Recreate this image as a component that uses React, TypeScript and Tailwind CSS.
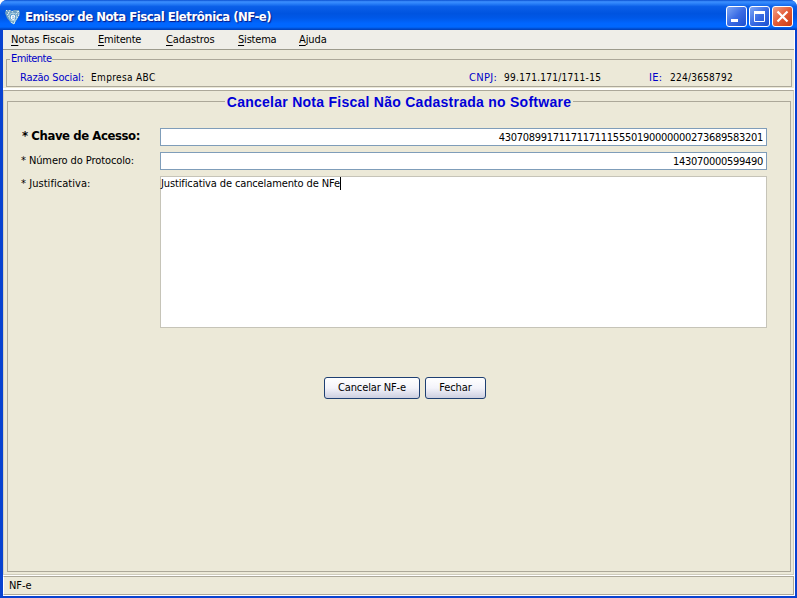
import type { ReactNode } from 'react';

function AppIcon() {
  return (
    <svg width="16" height="16" viewBox="0 0 16 16" className="shrink-0">
      <path d="M1 1h4l2 1 2-1h5l1 3-2 5-4 6-3-1-4-5-2-5z" fill="#6d9fc4" />
      <path d="M1 1l3 3M5 1L3 6M14 2l-3 3M2 5l3 4M14 6l-4 6M7 2l1 2M12 2l2 4" stroke="#e7f4f5" strokeWidth="1" strokeDasharray="1.5 1" />
      <circle cx="8" cy="8" r="3.8" fill="#3f87c0" stroke="#b9dce9" />
      <path d="M6.2 8.2h3.5c.2-2.7-3.3-2.8-3.5 0 0 2.3 2.3 2.6 3.5 1.3" fill="none" stroke="white" strokeWidth="1.3" />
      <path d="M6 13l3 2 1-3" fill="none" stroke="#d5eef2" />
    </svg>
  );
}

function CaptionButton({ close = false, children }: { close?: boolean; children: ReactNode }) {
  return (
    <button
      className={
        'h-[21px] w-[21px] shrink-0 rounded-[3px] border border-white ' +
        (close
          ? 'bg-linear-to-br from-[#f0a088] via-[#e35a35] to-[#c83c14]'
          : 'bg-linear-to-br from-[#7fa6f4] via-[#3a6be4] to-[#1c4fd0]')
      }
    >
      <svg width="19" height="19" viewBox="0 0 19 19">{children}</svg>
    </button>
  );
}

function MenuItem({ label, className }: { label: string; className: string }) {
  return (
    <span className={'shrink-0 ' + className}>
      <span className="underline underline-offset-2">{label[0]}</span>
      {label.slice(1)}
    </span>
  );
}

export default function App() {
  return (
    <div className="h-[598px] w-[797px] overflow-hidden bg-white font-['DejaVu_Sans_Condensed','DejaVu_Sans',sans-serif] text-[11px] leading-[14px] whitespace-nowrap text-black">
      <div className="flex h-full flex-col rounded-t-[7px] bg-[#0842d0] pr-[2px] pb-[2px] pl-[3px]">
        <header className="-mr-[2px] -ml-[3px] flex h-[30px] shrink-0 items-center rounded-t-[7px] bg-[linear-gradient(180deg,#0a4fd0_0%,#3c90ff_6%,#2a80f8_12%,#0a5fe8_22%,#0054e0_45%,#0058e8_60%,#0066ff_78%,#0068ff_90%,#0048c8_97%,#0040b8_100%)] pt-[3px] pr-[4px] pl-[5px]">
          <AppIcon />
          <h1 className="ml-[4px] w-[248px] text-[13px] font-bold tracking-[-0.47px] text-white [text-shadow:1px_1px_1px_#0a1883]">Emissor de Nota Fiscal Eletrônica (NF-e)</h1>
          <div className="ml-auto flex gap-[2px]">
            <CaptionButton><path d="M4 12h7v3H4z" fill="white" /></CaptionButton>
            <CaptionButton><path d="M4.500 5.500h10v9h-10z" fill="none" stroke="white" /><path d="M4 4h11v3H4z" fill="white" /></CaptionButton>
            <CaptionButton close><path d="M4.500 4.500l10 10M14.500 4.500l-10 10" stroke="white" strokeWidth="2.200" /></CaptionButton>
          </div>
        </header>

        <div className="flex min-h-0 flex-1 flex-col border-r border-white bg-[#ece9d8]">
          <nav className="flex h-[20px] shrink-0 border-b border-[#9c9a8c] bg-[#efeee8] pt-[3px] pl-[8px]">
            <MenuItem label="Notas Fiscais" className="w-[87px] tracking-[-0.05px]" />
            <MenuItem label="Emitente" className="w-[68px] tracking-[-0.2px]" />
            <MenuItem label="Cadastros" className="w-[72px] tracking-[-0.1px]" />
            <MenuItem label="Sistema" className="w-[61px] tracking-[-0.2px]" />
            <MenuItem label="Ajuda" className="tracking-[-0.1px]" />
          </nav>

          <section className="h-[40px] shrink-0 border-b-2 border-b-white pt-[2px] pr-[2px] pl-[3px]">
            <fieldset className="h-[35px] min-w-0 border border-[#aca899]">
              <legend className="ml-[3px] h-[14px] px-[1px] tracking-[-0.55px] text-[#0000c8]">Emitente</legend>
              <div className="flex items-center pt-[5px] pl-[13px]">
                <span className="w-[71px] tracking-[-0.15px] text-[#0000c8]">Razão Social:</span>
                <span className="w-[378px] text-[10px] tracking-[0.35px]">Empresa ABC</span>
                <span className="w-[35px] tracking-[0.3px] text-[#0000c8]">CNPJ:</span>
                <span className="w-[145px] text-[10px] tracking-[0.28px]">99.171.171/1711-15</span>
                <span className="w-[21px] tracking-[0.3px] text-[#0000c8]">IE:</span>
                <span className="text-[10px] tracking-[0.25px]">224/3658792</span>
              </div>
            </fieldset>
          </section>

          <main className="flex min-h-0 flex-1 flex-col border border-t-[#aca899] border-r-[#cfccbd] border-b-[#cfccbd] border-l-[#d4d1c2] pt-px pr-[2px] pl-[3px]">
            <fieldset className="h-[480px] min-w-0 border border-[#aca899]">
              <legend className="mx-auto h-[19px] px-[2px] pt-px font-['Liberation_Sans',sans-serif] text-[14px] leading-[19px] font-bold tracking-[0.26px] text-[#0000d8]">Cancelar Nota Fiscal Não Cadastrada no Software</legend>
              <form className="pt-[17px] pr-[23px] pl-[13px]">
                <div className="flex h-[24px] items-start">
                  <label className="w-[139px] shrink-0 pl-px text-[13px] leading-[16px] font-bold tracking-[-0.42px]">* Chave de Acesso:</label>
                  <div className="h-[18px] min-w-0 flex-1 border border-[#7f9db9] bg-white pt-px pr-[3px] text-right leading-[15px] tracking-[-0.29px]">43070899171171171115550190000000273689583201</div>
                </div>
                <div className="flex h-[24px] items-start">
                  <label className="w-[139px] shrink-0 pt-[2px] tracking-[-0.1px]">* Número do Protocolo:</label>
                  <div className="h-[18px] min-w-0 flex-1 border border-[#7f9db9] bg-white pt-px pr-[3px] text-right leading-[15px] tracking-[-0.29px]">143070000599490</div>
                </div>
                <div className="flex items-start">
                  <label className="w-[139px] shrink-0 pt-px tracking-[0.05px]">* Justificativa:</label>
                  <div className="flex h-[152px] min-w-0 flex-1 border border-[#c6c4b8] bg-white">
                    <span className="tracking-[-0.12px]">Justificativa de cancelamento de NFe</span>
                    <span className="h-[13px] w-px bg-black" />
                  </div>
                </div>
                <div className="mt-[49px] flex gap-[5px] pl-[303px]">
                  <button type="button" className="h-[22px] w-[96px] rounded-[3px] border border-[#1e3f72] bg-linear-to-b from-white via-[#f3f3fa] to-[#cdcfe0] tracking-[-0.12px]">Cancelar NF-e</button>
                  <button type="button" className="h-[22px] w-[61px] rounded-[3px] border border-[#1e3f72] bg-linear-to-b from-white via-[#f3f3fa] to-[#cdcfe0] tracking-[-0.05px]">Fechar</button>
                </div>
              </form>
            </fieldset>
          </main>

          <footer className="h-[21px] shrink-0 border-y border-white">
            <div className="h-[19px] border border-[#aca899] border-l-white pt-[2px] pl-[5px] tracking-[-0.05px]">NF-e</div>
          </footer>
        </div>
      </div>
    </div>
  );
}
